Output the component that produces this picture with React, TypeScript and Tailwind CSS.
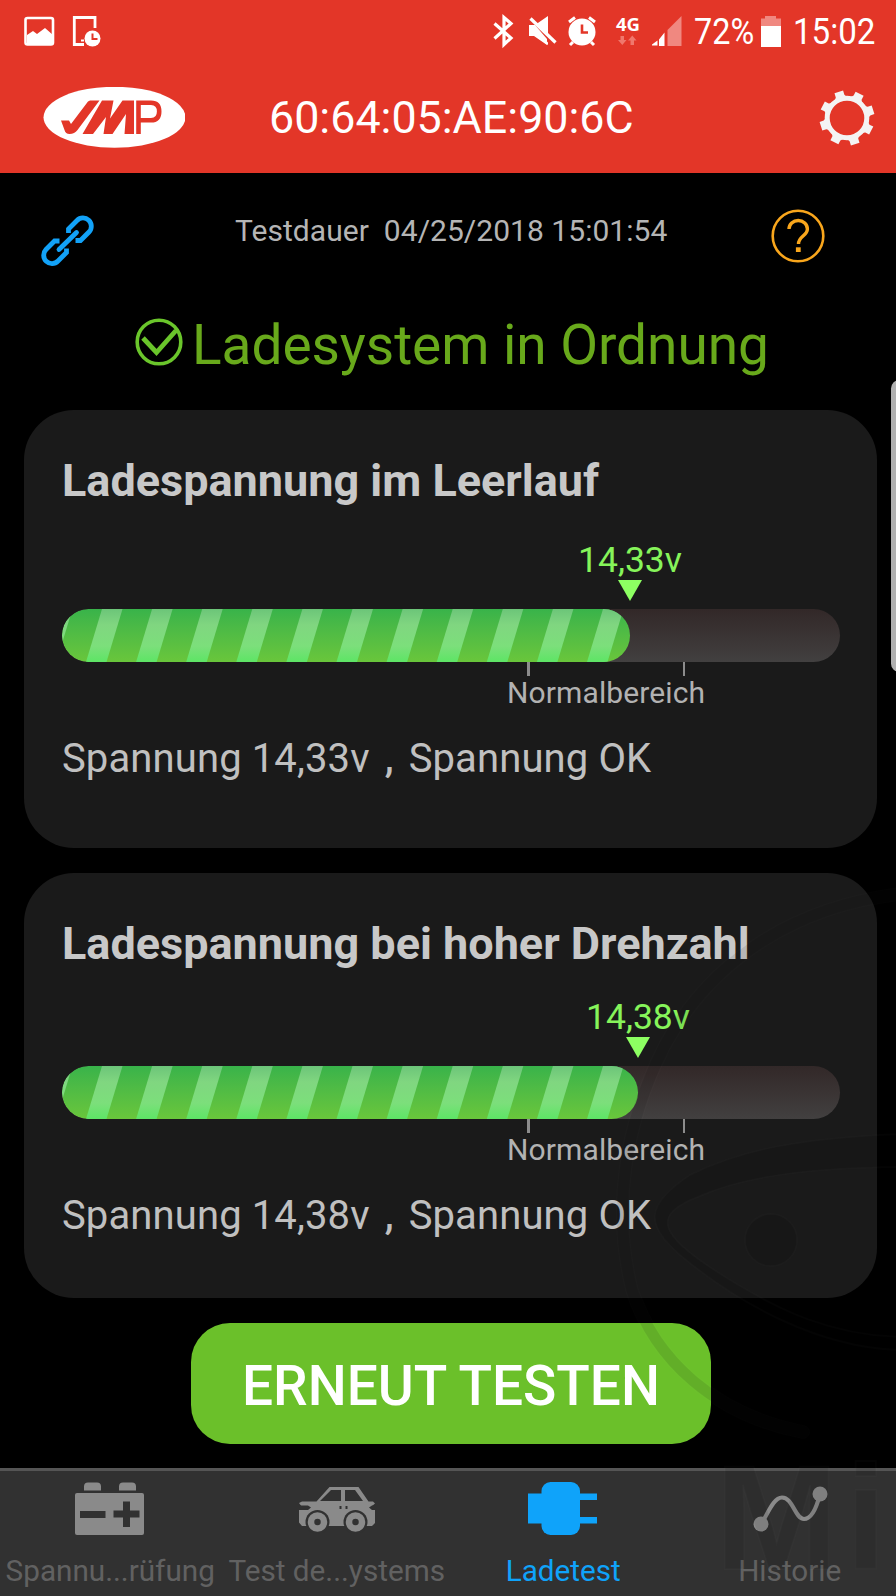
import type { ReactNode } from "react";

type Measurement = {
  title: string;
  value: string;
  fill: number;
  cardClass: string;
  gaugeClass: string;
};

const MEASUREMENTS: Measurement[] = [
  {
    title: "Ladespannung im Leerlauf",
    value: "14,33v",
    fill: 568,
    cardClass: "h-[438px]",
    gaugeClass: "mt-[32px]",
  },
  {
    title: "Ladespannung bei hoher Drehzahl",
    value: "14,38v",
    fill: 576,
    cardClass: "mt-[25px] h-[425px]",
    gaugeClass: "mt-[26px]",
  },
];

const STRIPES = [-1, 0, 1, 2, 3, 4, 5, 6, 7, 8, 9, 10];

function StatusBar() {
  return (
    <div className="flex h-[62px] items-center justify-between pl-6 pr-[21px] text-white">
      <svg width="80" height="32" viewBox="24 14 80 32" fill="none">
        <rect x="25.500" y="17" width="27.500" height="26.500" rx="2" stroke="#fff" strokeWidth="2.600" />
        <path d="M27 34l6-4 4 3 8-6 8 7v9H27z" fill="#fff" />
        <path d="M95 27V16.500H74.300V43.500H84" stroke="#fff" strokeWidth="2.800" />
        <path d="M81 39.500h3" stroke="#fff" strokeWidth="2" />
        <circle cx="92.500" cy="37.500" r="8" fill="#fff" />
        <path d="M92.500 32.500v5.500h5" stroke="#e33628" strokeWidth="2" />
      </svg>
      <div className="flex items-center">
        <svg width="192" height="48" viewBox="492 6 192 48" fill="none" className="mr-[10px]">
          <path d="M494.500 22.500L511 37L504 43.500V16.500L511 22.500L494.500 37.500" stroke="#fff" strokeWidth="3.200" />
          <path d="M529 24h6l13-9v29l-13-9h-6z" fill="#fff" />
          <path d="M529 19l24 23" stroke="#e33628" strokeWidth="6" />
          <path d="M535 24l12 14v6l-13-9h-5V24z" fill="#fff" />
          <path d="M530.500 17.500l25 24" stroke="#fff" strokeWidth="3.200" />
          <circle cx="582" cy="31" r="13.500" fill="#fff" />
          <path d="M569 21l6-4.500M595 21l-6-4.500M573 41l-3 3M591 41l3 3" stroke="#fff" strokeWidth="3" />
          <path d="M582 23.500v8h6" stroke="#e33628" strokeWidth="2.600" />
          <text x="616" y="30" className="fill-white font-['Open_Sans',sans-serif] text-[18.500px] font-bold">
            4G
          </text>
          <path d="M620.500 35h3.500v4h2.500l-4.200 5-4.300-5h2.500zM630.500 44v-4.500H628l4.300-5 4.200 5H634V44z" fill="#f0776c" />
          <path d="M667.500 29l14-14v30h-14z" fill="#f08880" />
          <path d="M652 44.500h5.500v-5l-5.500 4zM659 38.500l5.500-7V45H659z" fill="#fff" />
        </svg>
        <span className="mt-0.5 w-[60px] origin-left scale-x-[0.9] whitespace-nowrap text-[36px] leading-none">72%</span>
        <svg width="20" height="31" viewBox="0 0 20 31" className="ml-[7px] mr-[12px]">
          <path d="M0 2.500h4V0h11v2.500h5V11H0z" fill="#f08880" />
          <path d="M0 10h20v21H0z" fill="#fff" />
        </svg>
        <span className="mt-0.5 w-[82px] origin-left scale-x-[0.92] whitespace-nowrap text-[36px] leading-none">15:02</span>
      </div>
    </div>
  );
}

function JmpLogo() {
  return (
    <svg width="142" height="61" viewBox="43 87 142 61" fill="none">
      <ellipse cx="114.500" cy="117.300" rx="71" ry="30.500" fill="#fff" />
      <path d="M61 120.500h8l2 3.500 17-22.500 2-1h9.500L77.500 130q-3 4-8 4-4 0-5-4z" fill="#e33628" />
      <path d="M102 100.500h11.500l-3.500 18 12.500-18H134V134h-9.500l1.500-20-13.500 20h-9l2.500-17-13 17H82.500z" fill="#e33628" />
      <path d="M138.500 134v-31.300H151q8.200 0 8.200 8.800t-8.200 8.800h-12.500" stroke="#e33628" strokeWidth="4.600" />
    </svg>
  );
}

function GearIcon() {
  return (
    <svg width="56" height="56" viewBox="-28 -28 56 56" className="text-[#f4f4f4]">
      <circle r="19.800" fill="none" stroke="currentColor" strokeWidth="5" />
      {[0, 45, 90, 135, 180, 225, 270, 315].map((angle) => (
        <path key={angle} d="M-6.500-20l2-3v-4.300h9V-23l2 3z" fill="currentColor" transform={`rotate(${angle - 17.5})`} />
      ))}
    </svg>
  );
}

function Header() {
  return (
    <header className="h-[173px] bg-[#e33628]">
      <StatusBar />
      <div className="flex h-[111px] items-center pl-[43px] pr-[21px]">
        <JmpLogo />
        <h1 className="ml-[84px] mt-[2px] whitespace-nowrap text-[44.800px] leading-none text-white">60:64:05:AE:90:6C</h1>
        <div className="ml-auto">
          <GearIcon />
        </div>
      </div>
    </header>
  );
}

function TestInfo() {
  return (
    <div className="flex h-[124px] items-start pl-[40px] pr-[71px] pt-[36px]">
      <svg width="56" height="58" viewBox="40 211 56 58" fill="none" stroke="#12a2f8" strokeWidth="4.800" className="mt-[2px]">
        <path d="M68.500 233v-4l8.500-8.500a8 8 0 0 1 12 11.500l-8.500 8.500h-5" />
        <path d="M66.500 248.500v4l-8.500 8.500a8 8 0 0 1-12-11.500l8.500-8.500h5" />
        <path d="M59 249.500l17.500-17" strokeLinecap="round" />
      </svg>
      <p className="ml-[139px] whitespace-pre pt-[7px] text-[30px] leading-none tracking-[0.04px] text-[#b5b5b5]">
        {"Testdauer  04/25/2018 15:01:54"}
      </p>
      <svg width="54" height="54" viewBox="0 0 54 54" fill="none" stroke="#f9a61c" className="ml-auto">
        <circle cx="27" cy="27" r="25.300" strokeWidth="2.600" />
        <path d="M18 20a9.200 8.500 0 0 1 18.400 0c0 3.500-2 5-4.600 7.300-3 2.600-4.300 4-4.300 7.700" strokeWidth="3.400" />
        <path d="M27.300 38.300v4.700" strokeWidth="4.800" />
      </svg>
    </div>
  );
}

function Gauge({ value, fill }: { value: string; fill: number }) {
  return (
    <div className="w-[778px]">
      <div className="flex w-[140px] flex-col items-center" style={{ marginLeft: fill - 70 }}>
        <span className="text-[35.500px] leading-[42px] text-[#86f45a]">{value}</span>
        <svg width="24" height="21" viewBox="0 0 24 21" className="-mt-px">
          <path d="M0 0h24L12 21z" fill="#8dff62" />
        </svg>
      </div>
      <div className="mt-2 h-[53px] overflow-hidden rounded-full bg-linear-to-b from-[#322828] to-[#424040]">
        <div
          className="h-full overflow-hidden rounded-full bg-linear-to-b from-[#38b34a] to-[#69c63b]"
          style={{ width: fill }}
        >
          <svg width="576" height="53" viewBox="0 0 576 53">
            <defs>
              <linearGradient id="stripe" x1="0" y1="0" x2="0" y2="1">
                <stop offset="0" stopColor="#6cc579" />
                <stop offset="0.300" stopColor="#80d680" />
                <stop offset="0.700" stopColor="#7cdf7b" />
                <stop offset="1" stopColor="#5de565" />
              </linearGradient>
            </defs>
            {STRIPES.map((i) => (
              <path key={i} d="M40 0h20.500L44.500 53H24z" fill="url(#stripe)" transform={`translate(${i * 50.1})`} />
            ))}
          </svg>
        </div>
      </div>
      <div className="ml-[465px] flex h-[14px] w-[158px] justify-between">
        <span className="w-[2.500px] bg-[#8c8c8c]" />
        <span className="w-[2.500px] bg-[#8c8c8c]" />
      </div>
      <p className="ml-[445px] text-[30px] leading-[34px] tracking-[0.120px] text-[#b2b2b2]">Normalbereich</p>
    </div>
  );
}

function MeasurementCard({ item }: { item: Measurement }) {
  return (
    <section className={`ml-[24px] w-[853px] rounded-[50px] bg-[#1a1a1a] pl-[38px] pt-[45px] ${item.cardClass}`}>
      <h2 className="text-[45px] font-bold leading-[52px] text-[#c8c8c8]">{item.title}</h2>
      <div className={item.gaugeClass}>
        <Gauge value={item.value} fill={item.fill} />
      </div>
      <p className="mt-[25px] flex text-[40px] leading-[48px] tracking-[0.120px] text-[#c0c0c0]">
        <span>Spannung {item.value}</span>
        <span className="w-[39px] pl-[15px] font-medium">,</span>
        <span>Spannung OK</span>
      </p>
    </section>
  );
}

function Tab({ label, active, children }: { label: string; active?: boolean; children: ReactNode }) {
  return (
    <button
      className={`flex w-[226.500px] shrink-0 flex-col items-center ${active ? "text-[#0fa3fa]" : "text-[#8a8a8a]"}`}
    >
      {children}
      <span className={`whitespace-nowrap text-[29.700px] leading-[36px] ${active ? "" : "text-[#616161]"}`}>{label}</span>
    </button>
  );
}

function TabBar() {
  return (
    <nav className="-ml-[3px] flex h-[128px] w-[900px] border-t-[3px] border-[#555] bg-[#313131] pt-[10px]">
      <Tab label="Spannu...rüfung">
        <svg width="70" height="72" viewBox="76 1481 70 72" fill="currentColor">
          <path d="M85 1490.500v-4q0-4 4-4h9q4 0 4 4v4zM120 1490.500v-4q0-4 4-4h9q4 0 4 4v4z" />
          <rect x="76" y="1493" width="69" height="42" rx="2" />
          <path d="M81 1514.500h25.500M114.500 1514h26M127.500 1501.500v25.500" stroke="#313131" strokeWidth="7" />
        </svg>
      </Tab>
      <Tab label="Test de...ystems">
        <svg width="76" height="72" viewBox="299 1481 76 72">
          <path
            d="M299 1503l3-1.500h14.500l13-14.500h29l10 14.500h4.500l2 2-3 2.500 3 4v13l-3 3H302l-3-3.500V1510l3-3z"
            fill="currentColor"
          />
          <path d="M331 1490h10v11h-21zM345 1490h10l8 11h-18z" fill="#313131" />
          <path d="M299 1505.500h9l3 2-3 2.500h-9M375 1505.500h-3l-3 2 3 2.500h3" fill="#313131" />
          <path d="M340.500 1506v3M346.500 1506v3" stroke="#313131" strokeWidth="2" />
          <circle cx="317.500" cy="1522" r="12" fill="#313131" />
          <circle cx="355.500" cy="1522" r="12" fill="#313131" />
          <circle cx="317.500" cy="1522" r="6.500" fill="none" stroke="currentColor" strokeWidth="6.500" />
          <circle cx="355.500" cy="1522" r="6.500" fill="none" stroke="currentColor" strokeWidth="6.500" />
        </svg>
      </Tab>
      <Tab label="Ladetest" active>
        <svg width="70" height="72" viewBox="529 1481 70 72" fill="currentColor">
          <rect x="542.500" y="1482" width="38.500" height="53" rx="9" />
          <path d="M529 1493.500h16v30h-16zM578 1493.500h20v6.500h-20zM578 1517h20v6.500h-20z" />
        </svg>
      </Tab>
      <Tab label="Historie">
        <svg width="76" height="72" viewBox="752 1481 76 72" fill="none" stroke="currentColor">
          <path d="M761 1524c6-8 12-26.500 21-26.500 11 0 13 21.500 22 21.500 8 0 13-13 16-25" strokeWidth="4.200" />
          <circle cx="761" cy="1524" r="7.500" fill="currentColor" stroke="none" />
          <circle cx="820" cy="1494" r="7.500" fill="currentColor" stroke="none" />
        </svg>
      </Tab>
    </nav>
  );
}

// Faint decoration in the lower right corner, drawn over the whole screen.
function Watermark() {
  const face = "M900 894C800 906 715 955 665 1045C624 1125 612 1210 632 1290C655 1360 715 1415 803 1432";
  return (
    <svg
      width="316"
      height="716"
      viewBox="580 880 316 716"
      fill="none"
      className="pointer-events-none absolute bottom-0 right-0"
    >
      <path d={face} stroke="#fff" strokeOpacity="0.012" strokeWidth="14" strokeLinecap="round" />
      <path d={face} stroke="#000" strokeOpacity="0.090" strokeWidth="11" strokeLinecap="round" />
      <g fill="#000" fillOpacity="0.080" stroke="#fff" strokeOpacity="0.014" strokeWidth="2">
        <path d="M900 1134C800 1138 740 1150 690 1175C645 1205 645 1225 680 1255C740 1305 820 1348 900 1350V1337C830 1335 780 1310 735 1283C655 1235 650 1215 700 1196C750 1174 820 1168 900 1167Z" />
        <circle cx="771" cy="1240" r="26" />
        <text x="715" y="1569" className="font-['Liberation_Sans',sans-serif] text-[148px] font-bold tracking-[7px]">
          Mi
        </text>
      </g>
    </svg>
  );
}

export default function App() {
  return (
    <div className="relative h-[1596px] w-[896px] overflow-hidden bg-black font-['Roboto',sans-serif]">
      <Header />
      <main className="h-[1295px]">
        <TestInfo />
        <div className="flex h-[113px] pl-[135px] pt-[20px] text-[#68a91b]">
          <svg width="48" height="48" viewBox="0 0 48 48" fill="none" stroke="#6ac52b" className="mt-px">
            <circle cx="24" cy="24" r="21.800" strokeWidth="3.600" />
            <path d="M8 20l13.500 14.500L41 12.500" strokeWidth="4.800" />
          </svg>
          <p className="ml-[9px] whitespace-nowrap text-[55px] leading-[56px] tracking-[-0.05px]">Ladesystem in Ordnung</p>
        </div>
        {MEASUREMENTS.map((item) => (
          <MeasurementCard key={item.title} item={item} />
        ))}
        <button className="ml-[191px] mt-[25px] flex h-[121px] w-[520px] items-center justify-center rounded-[39px] bg-[#6bc02a] pt-1.5 text-[55px] font-medium leading-none text-white">
          ERNEUT TESTEN
        </button>
      </main>
      <TabBar />
      <Watermark />
      <div className="absolute -right-3 top-[380px] h-[292px] w-[17px] rounded-[12px] bg-[#b0b0b0]" />
    </div>
  );
}
